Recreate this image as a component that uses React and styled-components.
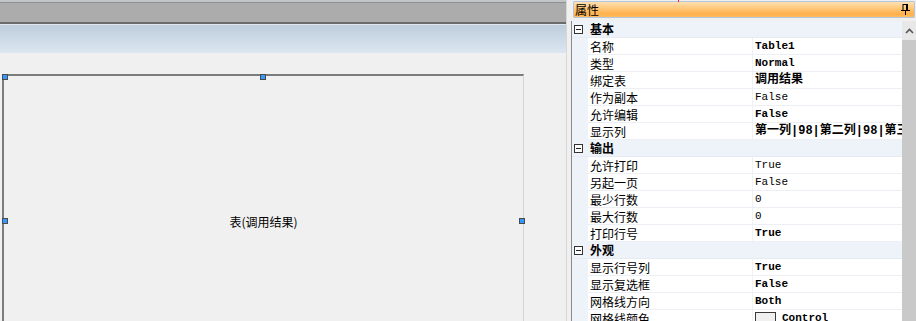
import React from "react";
import styled, { createGlobalStyle } from "styled-components";

const Global = createGlobalStyle`
  html, body { margin: 0; padding: 0; background: #f0f0f0; }
  body { font-family: "Noto Sans CJK SC", "DejaVu Sans", sans-serif; font-size: 12px; color: #000; }
`;

const Root = styled.div`
  display: flex;
  width: 916px;
  height: 321px;
  overflow: hidden;
  background: #f0f0f0;
`;

const Designer = styled.div`
  width: 566px;
  flex: none;
  display: flex;
  flex-direction: column;
  border-right: 1px solid #d8d8d8;
`;

const TopBar = styled.div`
  height: 20px;
  flex: none;
  background: #acacac;
  border-top: 2px solid #c2c4c6;
  box-shadow: inset 0 1px 0 #8e9092;
  border-bottom: 2px solid #6c6c6c;
`;

const Ribbon = styled.div`
  height: 28px;
  flex: none;
  border-top: 1px solid #e2e8ee;
  background: linear-gradient(#bfcedc, #dbe6f1);
`;

const Canvas = styled.div`
  flex: 1;
  overflow: hidden;
  padding: 21px 0 0 2px;
`;

const TableBox = styled.div`
  position: relative;
  width: 519px;
  height: 290px;
  border-top: 2px solid #7c7c7c;
  border-left: 2px solid #7c7c7c;
  border-right: 1px solid #d4d4d4;
  display: flex;
  align-items: center;
  justify-content: center;
  font-size: 12px;
  box-sizing: content-box;
`;

const Handle = styled.span`
  position: absolute;
  width: 4px;
  height: 4px;
  background: #3399ff;
  border: 1px solid #4a4a4a;
  left: ${(p) => p.$x}px;
  top: ${(p) => p.$y}px;
`;

const Splitter = styled.div`
  width: 4px;
  flex: none;
`;

const Panel = styled.div`
  position: relative;
  flex: 1;
  display: flex;
  flex-direction: column;
`;

const RedMark = styled.span`
  position: absolute;
  left: 107px;
  top: 0;
  width: 1px;
  height: 2px;
  background: #ff2020;
`;

const Header = styled.div`
  height: 15px;
  margin: 1px 1px 0 2px;
  border: 1px solid #b5c6dc;
  border-radius: 1px;
  background: linear-gradient(#fee0b2, #ffc676 45%, #ffb04a 80%, #ffbd62);
  display: flex;
  align-items: center;
  justify-content: space-between;
  padding: 0 4px 0 1px;
  font-size: 12px;
  line-height: 15px;
`;

const Body = styled.div`
  margin-top: 3px;
  flex: 1;
  display: flex;
  min-height: 0;
`;

const Grid = styled.div`
  flex: 1;
  border-left: 1px solid #8a8a8a;
  display: grid;
  grid-template-columns: 16px 164px 1fr;
  grid-auto-rows: 17px;
  overflow: hidden;
  background: #fff;
`;

const CatRow = styled.div`
  grid-column: 1 / -1;
  display: flex;
  align-items: center;
  background: #eef2f9;
  border-bottom: 1px solid #e6ebf3;
  font-weight: bold;
  font-size: 12px;
  line-height: 16px;
`;

const Expander = styled.span`
  width: 7px;
  height: 7px;
  margin: 0 7px 0 2px;
  border: 1px solid #333;
  position: relative;
  background: #fff;
  flex: none;
  &::after {
    content: "";
    position: absolute;
    left: 1px;
    right: 1px;
    top: 3px;
    height: 1px;
    background: #222;
  }
`;

const Gutter = styled.div`
  background: #eef2f9;
`;

const Label = styled.div`
  padding: 1px 0 0 2px;
  border-bottom: 1px solid #eceff4;
  line-height: 15px;
  font-size: 12px;
  white-space: nowrap;
  overflow: hidden;
`;

const Value = styled.div`
  padding: 1px 0 0 2px;
  border-left: 1px solid #eef1f6;
  border-bottom: 1px solid #eceff4;
  line-height: 15px;
  font-size: 11px;
  font-family: "Liberation Mono", "Noto Sans CJK SC", monospace;
  font-weight: ${(p) => (p.$bold ? "bold" : "normal")};
  white-space: nowrap;
  overflow: hidden;
  display: flex;
  align-items: center;
  ${(p) => (p.$cjk ? "font-size: 12px;" : "")}
`;

const Swatch = styled.span`
  width: 19px;
  height: 12px;
  border: 1px solid #3a3a3a;
  background: #f0f0f0;
  margin-right: 6px;
  flex: none;
`;

const Scrollbar = styled.div`
  width: 14px;
  flex: none;
  background: #c9c9c9;
  display: flex;
  flex-direction: column;
`;

const ScrollBtn = styled.div`
  height: 19px;
  background: #e8e8e8;
  display: flex;
  align-items: center;
  justify-content: center;
`;

const Pin = () => (
  <svg width="9" height="11" viewBox="0 0 9 11">
    <rect x="2" y="0.5" width="4" height="6" fill="none" stroke="#000" strokeWidth="1" />
    <rect x="5" y="0" width="2" height="7" fill="#000" />
    <rect x="0" y="6" width="9" height="1" fill="#000" />
    <rect x="4" y="7" width="1" height="4" fill="#000" />
  </svg>
);

const Chevron = () => (
  <svg width="9" height="6" viewBox="0 0 9 6">
    <path d="M1 5 L4.5 1.5 L8 5" fill="none" stroke="#555" strokeWidth="1.6" />
  </svg>
);

const sections = [
  {
    title: "基本",
    rows: [
      ["名称", "Table1", true],
      ["类型", "Normal", true],
      ["绑定表", "调用结果", true, true],
      ["作为副本", "False", false],
      ["允许编辑", "False", true],
      ["显示列", "第一列|98|第二列|98|第三列|98", true, true],
    ],
  },
  {
    title: "输出",
    rows: [
      ["允许打印", "True", false],
      ["另起一页", "False", false],
      ["最少行数", "0", false],
      ["最大行数", "0", false],
      ["打印行号", "True", true],
    ],
  },
  {
    title: "外观",
    rows: [
      ["显示行号列", "True", true],
      ["显示复选框", "False", true],
      ["网格线方向", "Both", true],
      ["网格线颜色", "Control", true, false, true],
    ],
  },
];

export default function App() {
  return (
    <>
      <Global />
      <Root>
        <Designer>
          <TopBar />
          <Ribbon />
          <Canvas>
            <TableBox>
              <Handle $x={-2} $y={-2} />
              <Handle $x={256} $y={-2} />
              <Handle $x={-2} $y={142} />
              <Handle $x={515} $y={142} />
              表(调用结果)
            </TableBox>
          </Canvas>
        </Designer>
        <Splitter />
        <Panel>
          <RedMark />
          <Header>
            <span>属性</span>
            <Pin />
          </Header>
          <Body>
            <Grid>
              {sections.map((s) => (
                <React.Fragment key={s.title}>
                  <CatRow>
                    <Expander />
                    {s.title}
                  </CatRow>
                  {s.rows.map(([label, value, bold, cjk, swatch]) => (
                    <React.Fragment key={label}>
                      <Gutter />
                      <Label>{label}</Label>
                      <Value $bold={bold} $cjk={cjk}>
                        {swatch && <Swatch />}
                        {value}
                      </Value>
                    </React.Fragment>
                  ))}
                </React.Fragment>
              ))}
            </Grid>
            <Scrollbar>
              <ScrollBtn>
                <Chevron />
              </ScrollBtn>
            </Scrollbar>
          </Body>
        </Panel>
      </Root>
    </>
  );
}
